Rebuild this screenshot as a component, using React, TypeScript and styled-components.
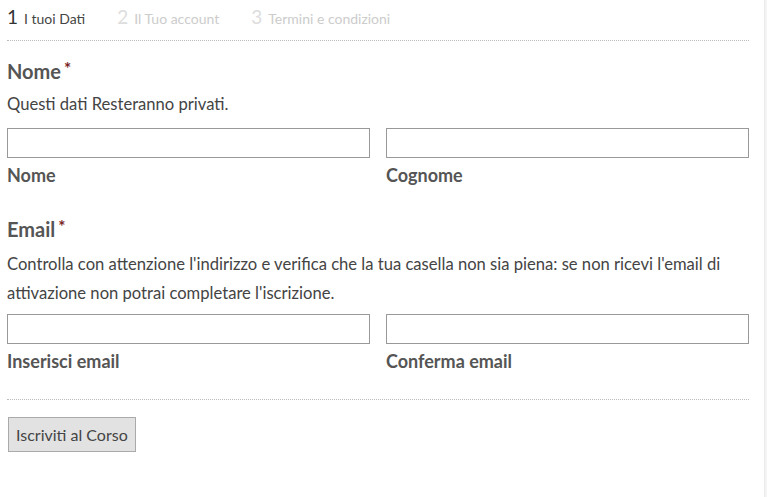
import React from "react";
import styled, { createGlobalStyle } from "styled-components";

const GlobalStyle = createGlobalStyle`
  body {
    margin: 0;
    background: #fff;
    font-family: Lato, "Open Sans", sans-serif;
    color: #555;
  }
`;

const Page = styled.div`
  display: flex;
  min-height: 497px;
`;

const Main = styled.div`
  flex: 1;
  padding: 0 15px 0 7px;
`;

const Side = styled.div`
  width: 2px;
  background: #f4f4f4;
  border-left: 1px solid #ececec;
`;

const Steps = styled.ol`
  list-style: none;
  margin: 0;
  padding: 5px 0 12px;
  display: flex;
  gap: 32px;
  border-bottom: 1px dotted #bbb;
`;

const Step = styled.li<{ $active?: boolean }>`
  display: flex;
  align-items: baseline;
  gap: 6px;
  color: ${(p) => (p.$active ? "#444" : "#ccc")};
  font-size: 14px;

  span {
    font-size: 19px;
    color: ${(p) => (p.$active ? "#333" : "#ddd")};
  }
`;

const Section = styled.section<{ $gap: number }>`
  padding-top: ${(p) => p.$gap}px;
`;

const Title = styled.h3`
  margin: 0;
  font-size: 20px;
  font-weight: 700;
  color: #555;
  line-height: 26px;

  em {
    font-style: normal;
    color: #7a1f1f;
    font-size: 17px;
    vertical-align: 4px;
    margin-left: 3px;
  }
`;

const Desc = styled.p<{ $top: number; $bottom: number }>`
  margin: ${(p) => p.$top}px 0 ${(p) => p.$bottom}px;
  font-size: 16.6px;
  line-height: 29px;
  color: #444;
`;

const Fields = styled.div`
  display: grid;
  grid-template-columns: 1fr 1fr;
  column-gap: 16px;
`;

const Field = styled.label`
  display: flex;
  flex-direction: column;
  font-weight: 700;
  font-size: 18px;
  color: #555;
`;

const Input = styled.input`
  box-sizing: border-box;
  height: 30px;
  border: 1px solid #999;
  margin: 0 0 6px;
  padding: 4px 6px;
  font: inherit;
  font-weight: 400;
`;

const Divider = styled.div`
  margin-top: 27px;
  border-top: 1px dotted #bbb;
`;

const Submit = styled.button`
  margin: 17px 0 0 1px;
  height: 35px;
  padding: 0 7px;
  background: #e2e2e2;
  border: 1px solid #aaa;
  font-family: Lato, sans-serif;
  font-size: 16px;
  color: #444;
`;

export default function App() {
  return (
    <Page>
      <GlobalStyle />
      <Main>
        <Steps>
          <Step $active>
            <span>1</span>I tuoi Dati
          </Step>
          <Step>
            <span>2</span>Il Tuo account
          </Step>
          <Step>
            <span>3</span>Termini e condizioni
          </Step>
        </Steps>

        <Section $gap={15}>
          <Title>
            Nome<em>*</em>
          </Title>
          <Desc $top={6} $bottom={9}>
            Questi dati Resteranno privati.
          </Desc>
          <Fields>
            <Field>
              <Input type="text" />
              Nome
            </Field>
            <Field>
              <Input type="text" />
              Cognome
            </Field>
          </Fields>
        </Section>

        <Section $gap={28}>
          <Title>
            Email<em>*</em>
          </Title>
          <Desc $top={8} $bottom={6}>
            Controlla con attenzione l'indirizzo e verifica che la tua casella non sia piena: se non
            ricevi l'email di attivazione non potrai completare l'iscrizione.
          </Desc>
          <Fields>
            <Field>
              <Input type="email" />
              Inserisci email
            </Field>
            <Field>
              <Input type="email" />
              Conferma email
            </Field>
          </Fields>
        </Section>

        <Divider />
        <Submit>Iscriviti al Corso</Submit>
      </Main>
      <Side />
    </Page>
  );
}
